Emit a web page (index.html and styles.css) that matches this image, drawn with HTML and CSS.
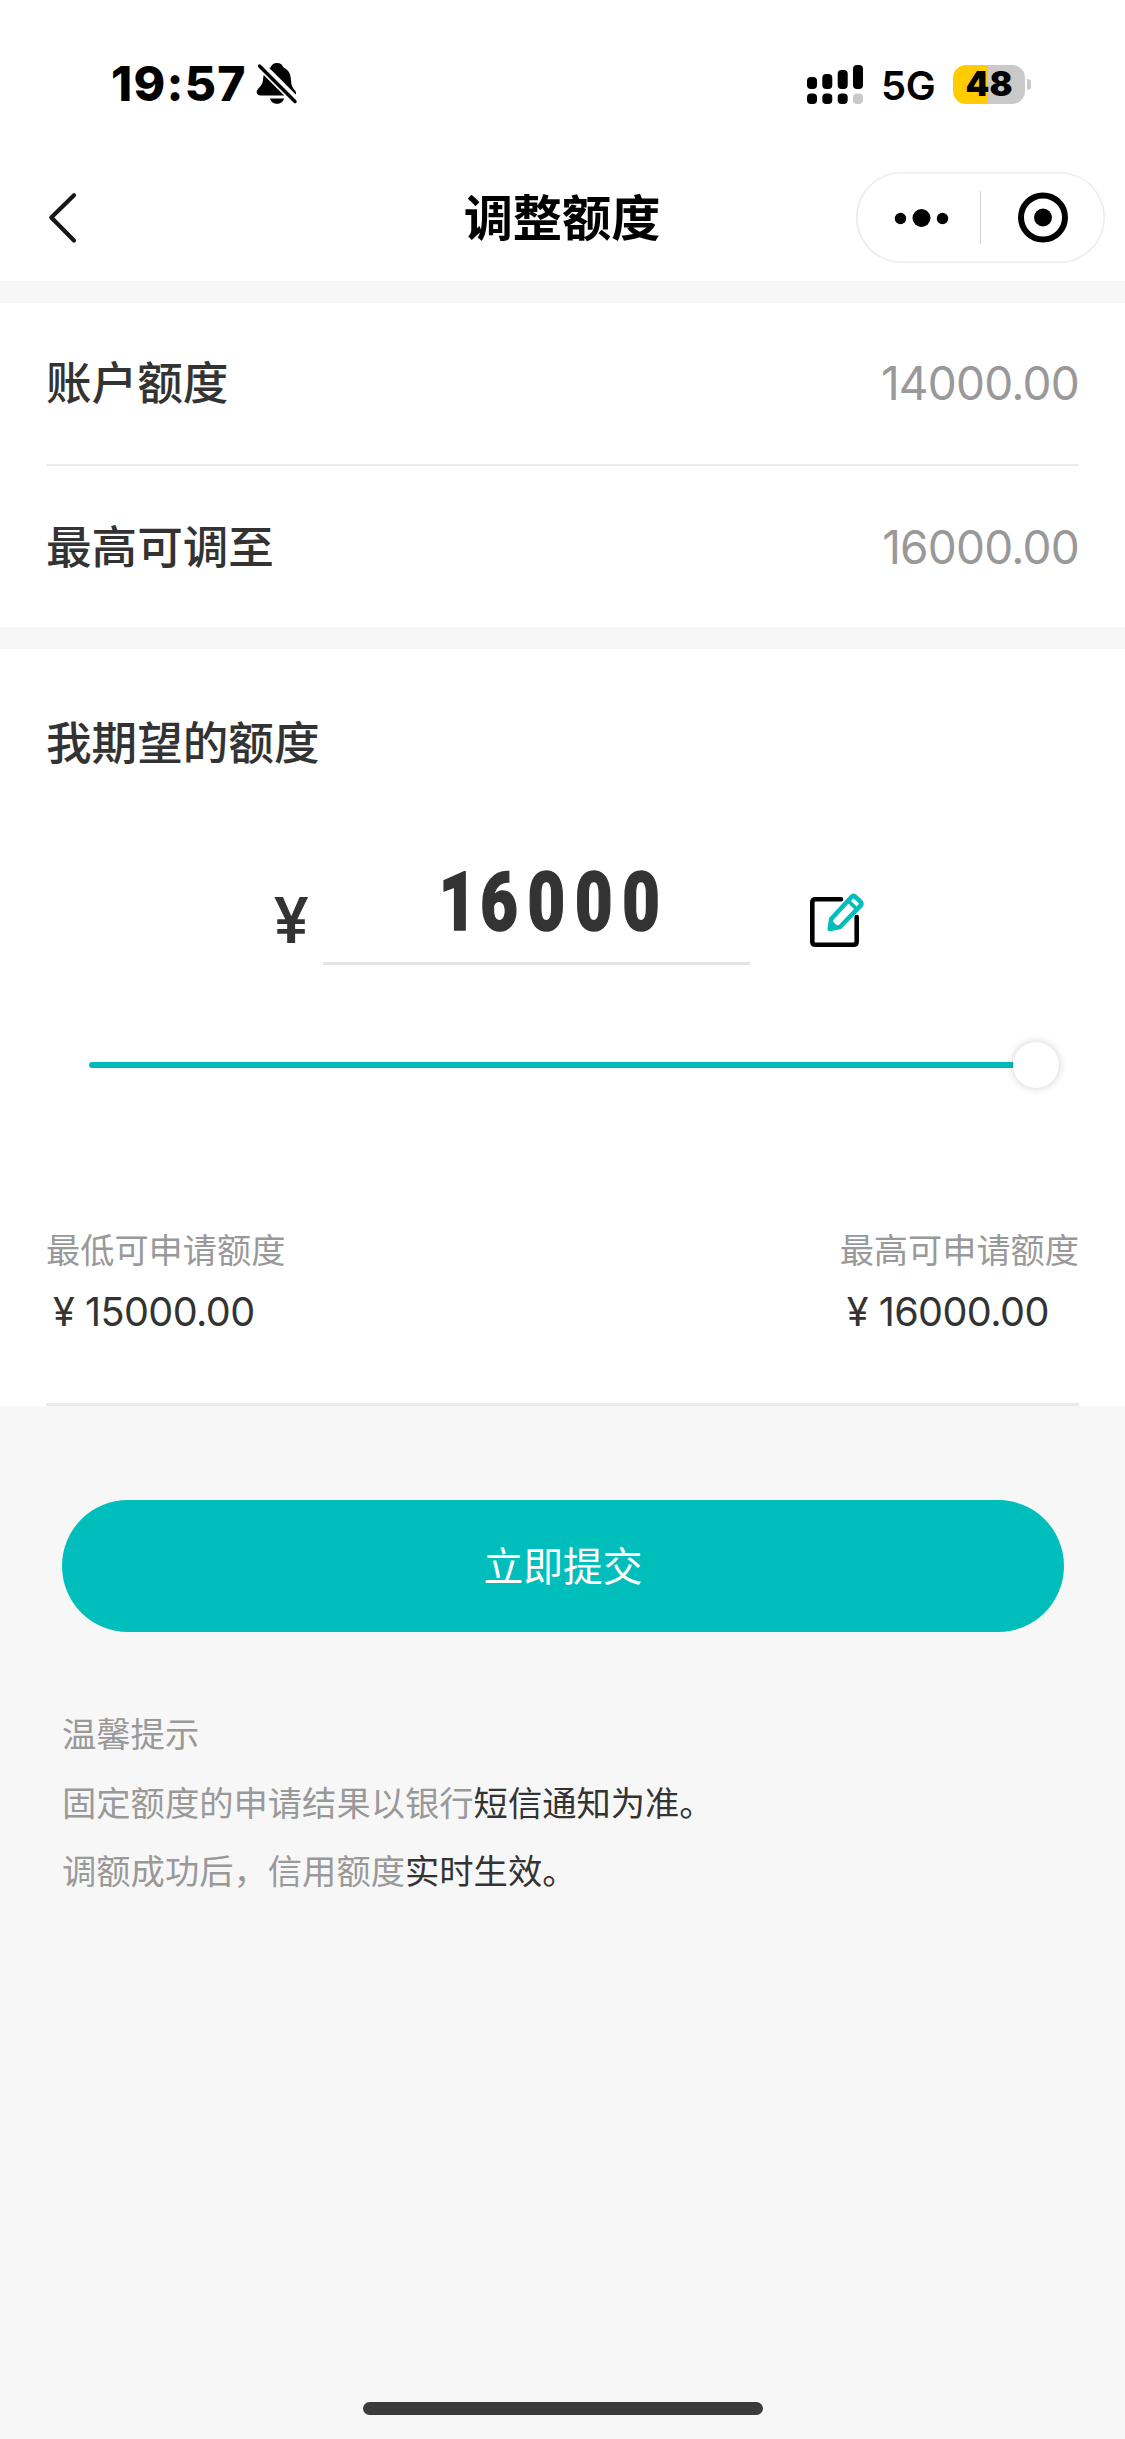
FILE: index.html
```html
<!DOCTYPE html>
<html lang="zh-CN">
<head>
<meta charset="utf-8">
<title>调整额度</title>
<link rel="stylesheet" href="styles.css">
</head>
<body>
<header class="top">
  <div class="status">
    <span class="time">19:57</span>
    <svg class="bell" width="42" height="44" viewBox="0 0 42 44">
      <path d="M21 1c3.500 0 5.500 2 6.500 4.500C33 8 34.500 12 35 18c.3 5 1 7 4 10.500 2 3 1 5-2 5H5c-4 0-5.500-3-3.500-6C5 24 6.500 22 7 18 7.500 11 9.500 7.500 14.500 5.500 15.500 3 17.500 1 21 1z"/>
      <path d="M14 36.500h14c-1.500 7-12.500 7-14 0z"/>
      <path d="M1 0 42 41" stroke="#fff" stroke-width="9"/>
      <path d="M3.500 4 39 39.500" stroke="#000" stroke-width="3.500" stroke-linecap="round"/>
    </svg>
    <svg class="signal" width="56" height="39" viewBox="0 0 56 39">
      <rect x="0" y="12" width="10" height="12" rx="4"/><rect x="15.300" y="9" width="10" height="15" rx="4"/>
      <rect x="30.700" y="5" width="10" height="19" rx="4"/><rect x="46" y="0" width="10" height="24" rx="4"/>
      <rect x="0" y="28.500" width="10" height="10.500" rx="4"/><rect x="15.300" y="28.500" width="10" height="10.500" rx="4"/>
      <rect x="30.700" y="28.500" width="10" height="10.500" rx="4"/><rect x="46" y="28.500" width="10" height="10.500" rx="4" fill="#c9c9c9"/>
    </svg>
    <span class="net">5G</span>
    <span class="battery">48</span>
    <span class="nub"></span>
  </div>
  <div class="nav">
    <svg class="back" width="30" height="52" viewBox="0 0 30 52"><path d="M27 3.300 4.300 25.500 27 48.500" fill="none" stroke="#171717" stroke-width="4.200" stroke-linecap="round" stroke-linejoin="round"/></svg>
    <h1 class="title">调整额度</h1>
    <div class="capsule">
      <svg width="249" height="91" viewBox="0 0 249 91">
        <circle cx="44.500" cy="46.500" r="5.700"/><circle cx="65.500" cy="46" r="9"/><circle cx="86.500" cy="46.500" r="5.700"/>
        <path d="M124.500 19v53" stroke="#d0d0d0"/>
        <circle cx="187" cy="45.500" r="22" fill="none" stroke="#000" stroke-width="6"/><circle cx="187" cy="45.500" r="9"/>
      </svg>
    </div>
  </div>
</header>
<section class="limits">
  <div class="row"><span class="label">账户额度</span><span class="value">14000.00</span></div>
  <div class="row"><span class="label">最高可调至</span><span class="value">16000.00</span></div>
</section>
<section class="expect">
  <h2 class="heading">我期望的额度</h2>
  <div class="amount">
    <span class="yen">¥</span>
    <div class="field"><span class="digits"><span class="one">1</span>6000</span></div>
    <svg class="edit" width="56" height="58" viewBox="0 0 56 58" fill="none" stroke-linecap="round">
      <path d="M31 8.300H5.500q-3.200 0-3.200 3.200v39q0 3.200 3.200 3.200h38q3.200 0 3.200-3.200V26" stroke="#000" stroke-width="4.600"/>
      <g stroke="#00bebb" stroke-width="4.600" stroke-linejoin="round"><path d="M19.800 38 21.200 28 41.500 6q2-2 4 0l5 4.700q2 2 0 4L30 36z"/><path d="M38.500 10 46.500 18M21.500 31.500 26 36" stroke-width="3.600"/></g>
    </svg>
  </div>
  <div class="slider"><div class="track"></div><div class="thumb"></div></div>
  <div class="bounds">
    <div><p class="caption">最低可申请额度</p><p class="money"><i>¥</i>15000.00</p></div>
    <div><p class="caption">最高可申请额度</p><p class="money"><i>¥</i>16000.00</p></div>
  </div>
</section>
<button class="submit">立即提交</button>
<section class="tips">
  <p>温馨提示</p>
  <p>固定额度的申请结果以银行<b>短信通知为准。</b></p>
  <p>调额成功后，信用额度<b>实时生效。</b></p>
</section>
<div class="home"></div>
</body>
</html>
```

FILE: styles.css
```css
* { box-sizing: border-box; margin: 0; padding: 0; }
body {
  width: 1125px; height: 2439px; overflow: hidden;
  display: flex; flex-direction: column;
  background: #f7f7f7; color: #333;
  font-family: Inter, "Noto Sans CJK SC", sans-serif;
}
svg { display: block; flex: none; }
.top { height: 281px; background: #fff; color: #000; }
.status { height: 154px; padding: 14px 92px 0 111px; display: flex; align-items: center; }
.time { font-size: 48px; font-weight: 800; line-height: 60px; width: 145px; flex: none; letter-spacing: 1.300px; white-space: nowrap; }
.signal { margin-left: 509px; }
.net { width: 71px; flex: none; padding-left: 18px; font-size: 40px; font-weight: 600; line-height: 40px; letter-spacing: -.5px; margin-top: 3px; }
.battery {
  margin-left: 19px; width: 72px; height: 39px; border-radius: 13px;
  background: linear-gradient(90deg, #fc0 34.500px, #c9c9c9 34.500px);
  font-size: 34px; font-weight: 900; line-height: 38px; text-align: center; flex: none;
}
.nub { margin-left: 2px; width: 4px; height: 11px; border-radius: 0 5px 5px 0; background: #c9c9c9; flex: none; }
.nav { height: 127px; padding: 0 20px 0 47px; display: grid; grid-template-columns: 249px 1fr 249px; align-items: center; }
.title { font-size: 49.200px; font-weight: 700; line-height: 70px; text-align: center; transform: translateX(-14px); }
.capsule { width: 249px; height: 91px; border-radius: 46px; box-shadow: inset 0 0 0 1.500px #ececec; }
.limits { margin-top: 22px; height: 324px; padding: 0 46px; background: #fff; font-size: 45.600px; font-weight: 500; }
.row { height: 163px; display: flex; align-items: center; justify-content: space-between; }
.row:first-child { border-bottom: 2px solid #ebebeb; }
.label { padding-bottom: 7px; }
.value { color: #999; font-weight: 400; font-size: 46px; letter-spacing: -.800px; padding-bottom: 2px; }
.expect { margin-top: 22px; height: 757px; background: #fff; padding: 61px 46px 0; display: flex; flex-direction: column; }
.expect::after { content: ""; margin-top: auto; height: 3px; background: #ebebeb; }
.heading { font-size: 45.600px; font-weight: 500; line-height: 68px; }
.amount { height: 187px; display: flex; align-items: flex-end; padding-left: 228px; }
.yen { width: 49px; font: 500 65px/70px Roboto, sans-serif; padding-bottom: 9px; }
.yen::first-letter { letter-spacing: 0; }
.field { width: 427px; height: 110px; border-bottom: 3px solid #e5e5e5; text-align: right; padding-right: 80px; }
.digits { display: inline-block; font: 900 81px/96px Roboto, sans-serif; letter-spacing: 12.200px; transform: scaleX(.8); transform-origin: right; -webkit-text-stroke: 1.500px #333; }
.one { letter-spacing: 5px; }
.edit { margin: 0 0 16px 60px; }
.slider { height: 46px; margin: 77px 20px 0 43px; display: flex; align-items: center; }
.track { flex: 1; height: 6px; background: #00b9b6; border-radius: 3px 0 0 3px; }
.thumb { width: 46px; height: 46px; border-radius: 50%; background: #fff; box-shadow: 0 0 8px rgba(0,0,0,.2); }
.bounds { margin-top: 137px; display: flex; justify-content: space-between; }
.caption { color: #999; font-size: 34.200px; line-height: 52px; }
.money { font-size: 39.600px; line-height: 70px; letter-spacing: -.600px; padding-left: 7px; }
.money i { display: inline-block; width: 32px; font-style: normal; }
.submit {
  width: 1002px; height: 132px; margin: 94px 0 0 62px; padding-bottom: 6px; flex: none;
  border: 0; border-radius: 66px; background: #00bebb; color: #fff;
  font: 400 39.800px "Noto Sans CJK SC", sans-serif;
}
.tips { margin: 69px 62px 0; color: #999; font-size: 34.300px; line-height: 68.700px; }
.tips b { color: #333; font-weight: 400; }
.home { width: 400px; height: 13px; margin: auto auto 24px 363px; border-radius: 7px; background: #3b3b3b; }
```
